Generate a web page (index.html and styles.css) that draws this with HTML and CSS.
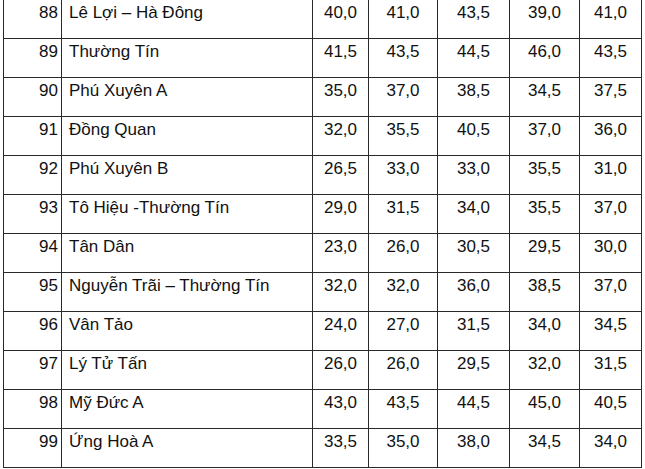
FILE: index.html
```html
<!DOCTYPE html>
<html lang="vi">
<head>
<meta charset="utf-8">
<link rel="stylesheet" href="styles.css">
</head>
<body>
<div class="grid">
  <div class="c no">88</div><div class="c name">Lê Lợi – Hà Đông</div><div class="c v">40,0</div><div class="c v">41,0</div><div class="c v">43,5</div><div class="c v">39,0</div><div class="c v">41,0</div>
  <div class="c no">89</div><div class="c name">Thường Tín</div><div class="c v">41,5</div><div class="c v">43,5</div><div class="c v">44,5</div><div class="c v">46,0</div><div class="c v">43,5</div>
  <div class="c no">90</div><div class="c name">Phú Xuyên A</div><div class="c v">35,0</div><div class="c v">37,0</div><div class="c v">38,5</div><div class="c v">34,5</div><div class="c v">37,5</div>
  <div class="c no">91</div><div class="c name">Đồng Quan</div><div class="c v">32,0</div><div class="c v">35,5</div><div class="c v">40,5</div><div class="c v">37,0</div><div class="c v">36,0</div>
  <div class="c no">92</div><div class="c name">Phú Xuyên B</div><div class="c v">26,5</div><div class="c v">33,0</div><div class="c v">33,0</div><div class="c v">35,5</div><div class="c v">31,0</div>
  <div class="c no">93</div><div class="c name">Tô Hiệu -Thường Tín</div><div class="c v">29,0</div><div class="c v">31,5</div><div class="c v">34,0</div><div class="c v">35,5</div><div class="c v">37,0</div>
  <div class="c no">94</div><div class="c name">Tân Dân</div><div class="c v">23,0</div><div class="c v">26,0</div><div class="c v">30,5</div><div class="c v">29,5</div><div class="c v">30,0</div>
  <div class="c no">95</div><div class="c name">Nguyễn Trãi – Thường Tín</div><div class="c v">32,0</div><div class="c v">32,0</div><div class="c v">36,0</div><div class="c v">38,5</div><div class="c v">37,0</div>
  <div class="c no">96</div><div class="c name">Vân Tảo</div><div class="c v">24,0</div><div class="c v">27,0</div><div class="c v">31,5</div><div class="c v">34,0</div><div class="c v">34,5</div>
  <div class="c no">97</div><div class="c name">Lý Tử Tấn</div><div class="c v">26,0</div><div class="c v">26,0</div><div class="c v">29,5</div><div class="c v">32,0</div><div class="c v">31,5</div>
  <div class="c no">98</div><div class="c name">Mỹ Đức A</div><div class="c v">43,0</div><div class="c v">43,5</div><div class="c v">44,5</div><div class="c v">45,0</div><div class="c v">40,5</div>
  <div class="c no">99</div><div class="c name">Ứng Hoà A</div><div class="c v">33,5</div><div class="c v">35,0</div><div class="c v">38,0</div><div class="c v">34,5</div><div class="c v">34,0</div>
</div>
</body>
</html>
```
FILE: styles.css
```css
html, body {
  margin: 0;
  padding: 0;
  background: #ffffff;
}
body {
  font-family: "Liberation Sans", Arial, sans-serif;
  font-size: 17px;
  color: #111111;
  overflow: hidden;
}
.grid {
  display: grid;
  grid-template-columns: 58px 251px 56px 69px 72px 70px 62px;
  grid-auto-rows: 39px;
  width: 639px;
  margin-left: 3px;
  margin-top: -1px;
  border-left: 1px solid #2a2a2a;
  border-top: 1px solid #2a2a2a;
}
.c {
  box-sizing: border-box;
  border-right: 1px solid #2a2a2a;
  border-bottom: 1px solid #2a2a2a;
  padding-top: 3px;
  white-space: nowrap;
  line-height: 19.5px;
}
.no {
  text-align: right;
  padding-right: 3px;
}
.name {
  text-align: left;
  padding-left: 7px;
}
.v {
  text-align: center;
}
```
